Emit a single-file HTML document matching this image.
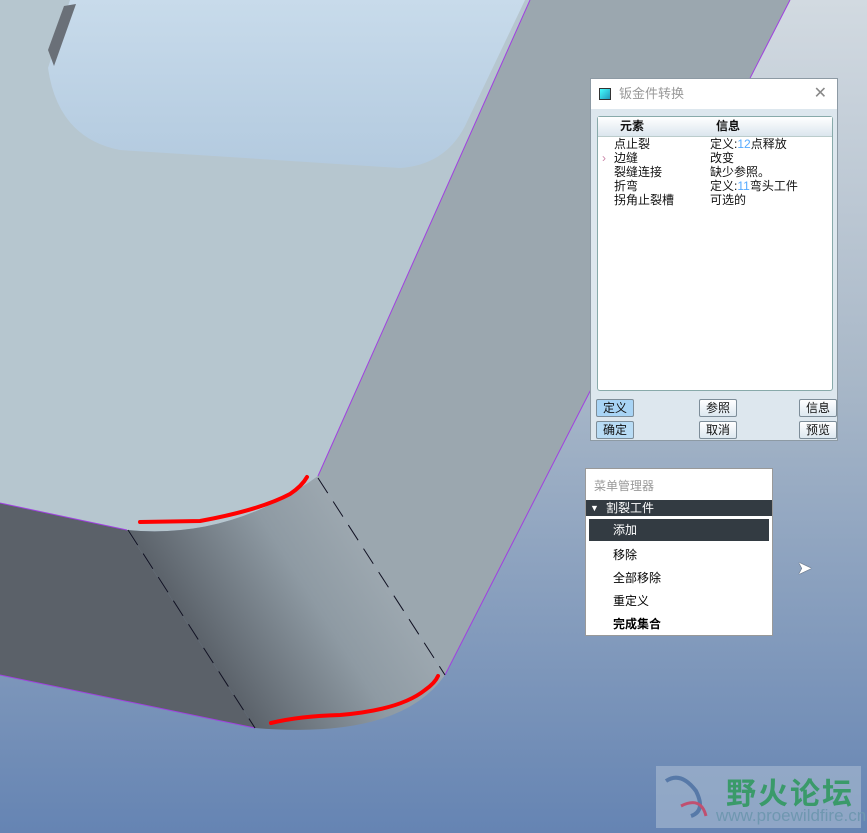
<!DOCTYPE html>
<html><head><meta charset="utf-8"><style>
body{margin:0;width:867px;height:833px;overflow:hidden;font-family:"Liberation Sans","Noto Sans CJK SC",sans-serif;position:relative}
svg{position:absolute;left:0;top:0}
.dlg{position:absolute;left:590px;top:78px;width:248px;height:363px;background:#dde7ee;border:1px solid #8d9aa4;box-sizing:border-box}
.dlg .tt{height:30px;background:#fff;font-size:13px;color:#999;line-height:30px;padding-left:28px;position:relative}
.tt .ic{position:absolute;left:8px;top:9px;width:10px;height:10px;background:linear-gradient(135deg,#4ff,#29b);border:1px solid #333}
.tt .x{position:absolute;right:10px;top:0;color:#888;font-size:16px}
.list{position:absolute;left:6px;top:37px;width:234px;height:273px;background:#fff;border:1px solid #8aa;border-radius:3px;font-size:12px;line-height:14px;color:#111}
.hd{height:19px;background:linear-gradient(#fff,#dbe6ee);border-bottom:1px solid #bcc;font-weight:bold;position:relative}
.hd span{position:absolute;top:2px}
.row{position:relative;height:14px}
.row span{position:absolute}
.b{position:absolute;height:18px;font-size:12px;line-height:17px;text-align:center;border:1px solid #7d8d99;border-radius:2px;background:linear-gradient(#fff,#dde8f0);color:#111;box-sizing:border-box}
.menu{position:absolute;left:585px;top:468px;width:188px;height:168px;background:#fff;border:1px solid #999;box-sizing:border-box;font-size:12px}
.menu div{position:absolute;left:0;right:0}
</style></head><body>
<svg width="867" height="833">
<defs>
<linearGradient id="bg" x1="0" y1="0" x2="0" y2="1"><stop offset="0" stop-color="#d2dae1"/><stop offset="0.45" stop-color="#a9b8c8"/><stop offset="1" stop-color="#6584b3"/></linearGradient>
<linearGradient id="cyl" gradientUnits="userSpaceOnUse" x1="200" y1="640" x2="420" y2="500"><stop offset="0" stop-color="#5c636b"/><stop offset="0.45" stop-color="#8e9aa3"/><stop offset="0.75" stop-color="#9ea9b1"/><stop offset="1" stop-color="#9aa6ae"/></linearGradient>
<linearGradient id="hole" x1="0" y1="0" x2="0" y2="1"><stop offset="0" stop-color="#c8dbeb"/><stop offset="1" stop-color="#b3cadf"/></linearGradient>
</defs>
<rect width="867" height="833" fill="url(#bg)"/>
<polygon points="530,0 790,0 445,675 318,476" fill="#9ba7af"/>
<path d="M0,0 L530,0 L318,476 Q230,540 127,530 L0,503 Z" fill="#b6c6cf"/>
<path d="M70,0 L525,0 L465,126 Q445,165 400,168 L120,150 Q58,138 48,68 Z" fill="url(#hole)"/>
<polygon points="48,50 64,6 76,4 54,66" fill="#6a7078"/>
<path d="M127,530 Q230,540 318,476 L445,675 Q400,740 255,728 Z" fill="url(#cyl)"/>
<polygon points="0,503 127,530 255,728 0,675" fill="#5b6169"/>
<line x1="530" y1="0" x2="318" y2="476" stroke="#a040e0" stroke-width="1"/>
<line x1="790" y1="0" x2="445" y2="675" stroke="#a040e0" stroke-width="1"/>
<line x1="0" y1="503" x2="127" y2="530" stroke="#a040e0"/>
<line x1="0" y1="675" x2="255" y2="728" stroke="#a040e0"/>
<g stroke="#112" stroke-width="1" stroke-dasharray="18,10">
<line x1="128" y1="530" x2="255" y2="728"/>
<line x1="318" y1="478" x2="445" y2="675"/>
</g>
<g fill="none" stroke="#f00" stroke-width="4" stroke-linecap="round">
<path d="M140,522 L200,521 Q260,510 290,494 Q302,486 307,477"/>
<path d="M271,723 Q300,716 340,715 Q400,710 425,690 Q435,683 438,676"/>
</g>
</svg>
<div class="dlg">
<div class="tt"><div class="ic"></div>钣金件转换<span class="x">✕</span></div>
<div class="list">
<div class="hd"><span style="left:22px">元素</span><span style="left:118px">信息</span></div>
<div class="row"><span style="left:16px">点止裂</span><span style="left:112px">定义:<b style="color:#5af;font-weight:normal">12</b>点释放</span></div>
<div class="row"><span style="left:4px;color:#c8a">›</span><span style="left:16px">边缝</span><span style="left:112px">改变</span></div>
<div class="row"><span style="left:16px">裂缝连接</span><span style="left:112px">缺少参照。</span></div>
<div class="row"><span style="left:16px">折弯</span><span style="left:112px">定义:<b style="color:#5af;font-weight:normal">11</b>弯头工件</span></div>
<div class="row"><span style="left:16px">拐角止裂槽</span><span style="left:112px">可选的</span></div>
</div>
<div class="b" style="left:5px;top:320px;width:38px;background:#a8d4f5">定义</div>
<div class="b" style="left:108px;top:320px;width:38px">参照</div>
<div class="b" style="left:208px;top:320px;width:38px">信息</div>
<div class="b" style="left:5px;top:342px;width:38px;background:#b8dcf5">确定</div>
<div class="b" style="left:108px;top:342px;width:38px">取消</div>
<div class="b" style="left:208px;top:342px;width:38px">预览</div>
</div>
<div class="menu">
<div style="top:8px;left:8px;color:#999">菜单管理器</div>
<div style="top:31px;height:16px;background:#333b42;color:#fff;line-height:16px;padding-left:20px"><span style="position:absolute;left:4px;font-size:9px">▼</span>割裂工件</div>
<div style="top:50px;left:3px;right:3px;height:22px;background:#333b42;color:#fff;line-height:22px;padding-left:24px">添加</div>
<div style="top:77px;left:27px">移除</div>
<div style="top:100px;left:27px">全部移除</div>
<div style="top:123px;left:27px">重定义</div>
<div style="top:146px;left:27px;font-weight:bold">完成集合</div>
</div>
<div style="position:absolute;left:797px;top:558px;font-size:18px;color:#fff;text-shadow:0 0 1px #000">➤</div>
<div style="position:absolute;left:656px;top:766px;width:205px;height:62px;background:rgba(170,188,210,0.6)">
<svg width="60" height="62"><path d="M10,15 Q25,5 40,25 Q50,45 35,50" fill="none" stroke="#5779a8" stroke-width="4"/><path d="M25,40 Q45,30 50,50" fill="none" stroke="#c05070" stroke-width="3"/></svg>
<div style="position:absolute;left:70px;top:3px;font-size:30px;font-weight:bold;color:#3a9a6a;letter-spacing:2px">野火论坛</div>
<div style="position:absolute;left:60px;top:40px;font-size:17px;color:#6f97b0">www.proewildfire.cn</div>
</div>
</body></html>
